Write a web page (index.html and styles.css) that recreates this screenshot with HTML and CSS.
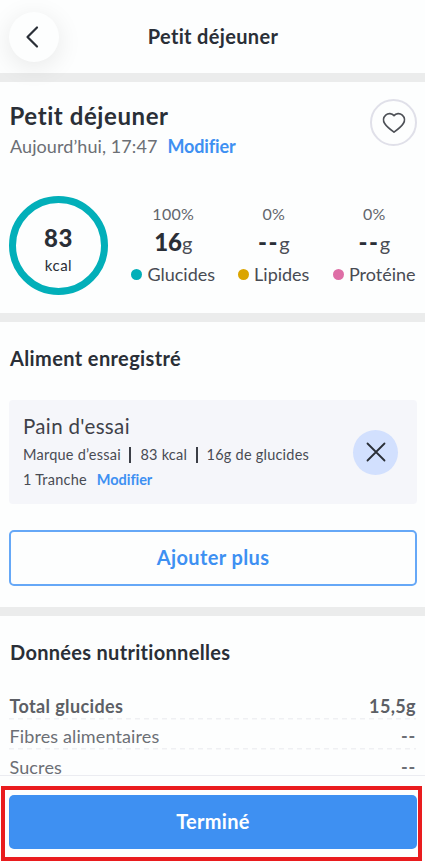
FILE: index.html
```html
<!DOCTYPE html>
<html lang="fr">
<head>
<meta charset="utf-8">
<title>Petit déjeuner</title>
<link rel="stylesheet" href="styles.css">
</head>
<body>
<div class="screen">
  <header class="topbar">
    <button class="back" aria-label="Retour">
      <svg width="14" height="24" viewBox="0 0 14 24"><path d="M12 2.500 2.500 12l9.500 9.500"/></svg>
    </button>
    <h1 class="topbar-title">Petit déjeuner</h1>
  </header>

  <section class="summary">
    <div class="summary-head">
      <div>
        <h2 class="meal-name">Petit déjeuner</h2>
        <p class="meal-time"><span>Aujourd’hui, 17:47</span><a class="link">Modifier</a></p>
      </div>
      <button class="favorite" aria-label="Favori">
        <svg width="24" height="22" viewBox="0 0 24 22"><path d="M12 3.600C10 1.300 6.200 1 3.700 3.100 1.200 5.300.900 8.800 2.700 11.500c1.800 2.800 5.600 6 9.300 8.600 3.700-2.600 7.500-5.800 9.300-8.600 1.800-2.700 1.500-6.200-1-8.400C17.800 1 14 1.300 12 3.600z"/></svg>
      </button>
    </div>
    <div class="stats">
      <div class="ring"><strong>83</strong><span>kcal</span></div>
      <div class="macros">
        <div class="macro">
          <div class="percent">100%</div>
          <div class="amount"><b>16</b><span>g</span></div>
          <div class="label"><i class="dot teal"></i>Glucides</div>
        </div>
        <div class="macro">
          <div class="percent">0%</div>
          <div class="amount empty"><b>--</b><span>g</span></div>
          <div class="label"><i class="dot gold"></i>Lipides</div>
        </div>
        <div class="macro">
          <div class="percent">0%</div>
          <div class="amount empty"><b>--</b><span>g</span></div>
          <div class="label"><i class="dot pink"></i>Protéine</div>
        </div>
      </div>
    </div>
  </section>

  <section class="foods">
    <h3 class="section-title">Aliment enregistré</h3>
    <div class="food">
      <div class="food-text">
        <div class="food-name">Pain d'essai</div>
        <div class="food-info"><span>Marque d’essai</span><i class="bar"></i><span>83 kcal</span><i class="bar"></i><span>16g de glucides</span></div>
        <div class="food-portion"><span>1 Tranche</span><a class="link small">Modifier</a></div>
      </div>
      <button class="remove" aria-label="Supprimer">
        <svg width="20" height="20" viewBox="0 0 20 20"><path d="M1.500 1.500l17 17M18.500 1.500l-17 17"/></svg>
      </button>
    </div>
    <button class="add">Ajouter plus</button>
  </section>

  <section class="nutrition">
    <h3 class="section-title">Données nutritionnelles</h3>
    <div class="row total"><span>Total glucides</span><span>15,5g</span></div>
    <div class="row"><span>Fibres alimentaires</span><span class="none">--</span></div>
    <div class="row last"><span>Sucres</span><span class="none">--</span></div>
  </section>

  <footer class="footer">
    <div class="highlight"><button class="done">Terminé</button></div>
  </footer>
</div>
</body>
</html>
```
FILE: styles.css
```css
* { box-sizing: border-box; margin: 0; padding: 0; }
body {
  background: #fdfefe;
  color: #2a2f37;
  font-family: Lato, "Liberation Sans", sans-serif;
  overflow: hidden;
}
button { font: inherit; border: 0; background: none; }
svg { display: block; fill: none; stroke: #2a2f37; stroke-width: 2; stroke-linecap: round; stroke-linejoin: round; }

.screen { display: flex; flex-direction: column; width: 425px; height: 861px; overflow: hidden; }

.topbar {
  display: grid;
  grid-template-columns: 50px 1fr 50px;
  align-items: center;
  flex: none;
  height: 82px;
  padding: 0 8px 0 9px;
  border-bottom: 9px solid #ebecec;
}
.back {
  display: grid;
  place-items: center;
  width: 50px;
  height: 50px;
  padding-right: 4px;
  border-radius: 50%;
  background: #fdfefe;
  box-shadow: 0 5px 26px rgba(0, 0, 0, .09);
}
.back svg { stroke-width: 2.200; }
.topbar-title { padding-bottom: 2px; font-size: 20px; line-height: 26px; letter-spacing: .330px; text-align: center; }

.summary { flex: none; height: 240px; padding: 19px 8px 0 9.500px; border-bottom: 9px solid #ebecec; }
.summary-head { display: flex; justify-content: space-between; height: 57px; }
.meal-name { font-size: 24px; line-height: 30px; letter-spacing: .580px; }
.meal-time { display: flex; gap: 10px; margin-top: 3px; padding-left: .500px; font-size: 18px; line-height: 24px; letter-spacing: .080px; color: #6c6f75; }
.link { color: #3e90f2; font-weight: 700; letter-spacing: -.150px; }
.favorite {
  display: grid;
  place-items: center;
  width: 47px;
  height: 47px;
  margin-top: -2px;
  border: 2px solid #e0e0e9;
  border-radius: 50%;
}
.favorite svg { stroke: #4d5056; stroke-width: 1.700; }

.stats { display: flex; margin: 38px 0 0 -.500px; }
.ring {
  display: flex;
  flex-direction: column;
  align-items: center;
  flex: none;
  width: 99px;
  height: 99px;
  padding-top: 20px;
  border: 7px solid #02afb9;
  border-radius: 50%;
}
.ring strong { font-size: 24px; font-weight: 900; line-height: 30px; letter-spacing: .600px; }
.ring span { margin-top: 3px; font-size: 15px; line-height: 18px; letter-spacing: .500px; }
.macros { display: grid; grid-template-columns: repeat(3, 100.500px); flex: none; margin: 8px 0 0 15px; }
.macro { display: flex; flex-direction: column; align-items: center; }
.percent { font-size: 16px; line-height: 20px; letter-spacing: .300px; color: #63666c; }
.amount { display: flex; align-items: baseline; margin-top: 3px; line-height: 30px; }
.amount b { font-size: 24px; font-weight: 900; }
.amount span { font-size: 20px; color: #4a4d55; }
.amount.empty b { letter-spacing: 1.700px; }
.label { display: flex; align-items: center; gap: 5px; margin-top: 4px; font-size: 18px; line-height: 24px; white-space: nowrap; color: #484b53; }
.dot { width: 11px; height: 11px; border-radius: 50%; }
.teal { background: #02afb9; }
.gold { background: #dba500; }
.pink { background: #de6ea6; }

.foods { flex: none; height: 294px; padding: 23px 8px 0 9px; border-bottom: 9px solid #ebecec; }
.section-title { padding-left: 1px; font-size: 20px; line-height: 26px; letter-spacing: .380px; }
.food {
  display: flex;
  justify-content: space-between;
  align-items: center;
  height: 104px;
  margin-top: 29px;
  padding: 0 19px 0 14px;
  border-radius: 4px;
  background: #f5f6fa;
}
.food-name { margin-top: -2px; font-size: 20.500px; line-height: 26px; letter-spacing: .350px; color: #3e4149; }
.food-info, .food-portion { display: flex; align-items: center; font-size: 14.500px; line-height: 20px; letter-spacing: .230px; color: #484b53; }
.food-info { margin-top: 6px; }
.food-portion { gap: 10px; margin-top: 5px; }
.link.small { letter-spacing: -.050px; }
.bar { width: 2px; height: 16px; margin: 0 9px 0 8.500px; background: #3c3f47; }
.remove { display: grid; place-items: center; width: 45px; height: 45px; border-radius: 50%; background: #d2e0fe; }
.remove svg { stroke-width: 1.800; }
.add {
  display: block;
  width: 100%;
  height: 56px;
  margin-top: 26px;
  padding-bottom: 2px;
  border: 2px solid #66a8f7;
  border-radius: 5px;
  color: #3e90f2;
  font-size: 20px;
  font-weight: 700;
  letter-spacing: .380px;
}

.nutrition { flex: none; height: 159px; padding: 23px 9px 0; }
.nutrition .section-title { margin-bottom: 29px; letter-spacing: .300px; }
.row {
  display: flex;
  justify-content: space-between;
  height: 30px;
  padding-left: .500px;
  font-size: 18px;
  line-height: 24px;
  letter-spacing: .120px;
  color: #6c6f75;
  background: repeating-linear-gradient(90deg, #eff0f3 0 5px, transparent 5px 9px) 0 24px / 100% 1.500px no-repeat;
}
.total { color: #5c5f65; font-weight: 700; letter-spacing: .370px; }
.last { height: 16px; margin-top: 5px; line-height: 16px; background: none; }
.none { font-weight: 700; letter-spacing: .800px; }

.footer { flex: 1; padding: 10px 3px 0 1px; border-top: 1px solid #ebecf1; background: #fdfefe; }
.highlight { height: 75px; padding: 5px 1px 0 4px; border: 4px solid #e91c1e; }
.done {
  display: block;
  width: 100%;
  height: 54px;
  padding-bottom: 2px;
  border-radius: 5px;
  background: #3e90f2;
  color: #fff;
  font-size: 20px;
  font-weight: 700;
  letter-spacing: .280px;
}
```
